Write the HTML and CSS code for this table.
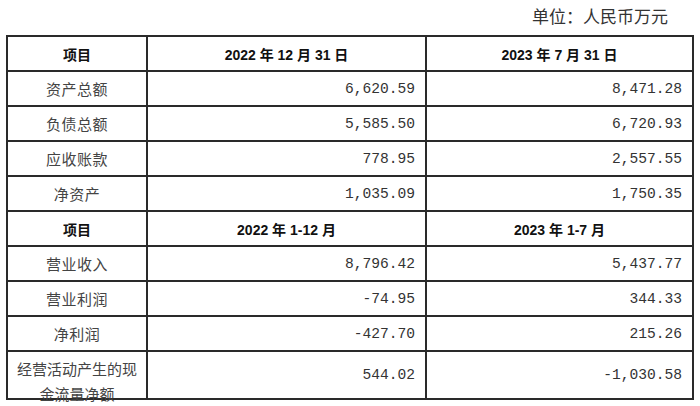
FILE: index.html
```html
<!DOCTYPE html>
<html lang="zh-CN">
<head>
<meta charset="UTF-8" />
<meta name="viewport" content="width=device-width, initial-scale=1" />
<title>主要财务数据</title>
<link rel="stylesheet" href="styles.css">
</head>
<body>
<div class="page">
  <div class="unit-note">单位：人民币万元</div>
  <table class="fin-table">
    <colgroup>
      <col class="col-item">
      <col class="col-a">
      <col class="col-b">
    </colgroup>
    <tr class="head-row">
      <th>项目</th>
      <th>2022 年 12 月 31 日</th>
      <th>2023 年 7 月 31 日</th>
    </tr>
    <tr>
      <td class="label">资产总额</td>
      <td class="num">6,620.59</td>
      <td class="num">8,471.28</td>
    </tr>
    <tr>
      <td class="label">负债总额</td>
      <td class="num">5,585.50</td>
      <td class="num">6,720.93</td>
    </tr>
    <tr>
      <td class="label">应收账款</td>
      <td class="num">778.95</td>
      <td class="num">2,557.55</td>
    </tr>
    <tr>
      <td class="label">净资产</td>
      <td class="num">1,035.09</td>
      <td class="num">1,750.35</td>
    </tr>
    <tr class="head-row">
      <th>项目</th>
      <th>2022 年 1-12 月</th>
      <th>2023 年 1-7 月</th>
    </tr>
    <tr>
      <td class="label">营业收入</td>
      <td class="num">8,796.42</td>
      <td class="num">5,437.77</td>
    </tr>
    <tr>
      <td class="label">营业利润</td>
      <td class="num">-74.95</td>
      <td class="num">344.33</td>
    </tr>
    <tr>
      <td class="label">净利润</td>
      <td class="num">-427.70</td>
      <td class="num">215.26</td>
    </tr>
    <tr class="tall-row">
      <td class="label"><div class="cash-label">经营活动产生的现金流量净额</div></td>
      <td class="num">544.02</td>
      <td class="num">-1,030.58</td>
    </tr>
  </table>
</div>
</body>
</html>
```

FILE: styles.css
```css
body, html {
  margin: 0; padding: 0; background: #fff; color: #333;
  font-family: "Liberation Serif", "Noto Sans CJK SC", serif;
}
.page {
  width: 700px; height: 406px; overflow: hidden;
}
.unit-note {
  text-align: right; padding-right: 32px; height: 35px; line-height: 32px;
  font-family: "Noto Sans CJK SC", sans-serif; font-size: 17px; color: #333;
}
.fin-table {
  margin-left: 6px; width: 686px; border-collapse: collapse; table-layout: fixed;
  border: 2px solid #222;
}
.col-item { width: 140px; }
.col-a { width: 279px; }
.col-b { width: 267px; }
.fin-table th, .fin-table td {
  border: 2px solid #2a2a2a; padding: 0; height: 33px;
}
.head-row th {
  font-family: "Liberation Sans", "Noto Sans CJK SC", sans-serif;
  font-size: 14px; font-weight: bold; color: #111; text-align: center;
}
.label {
  font-family: "Noto Sans CJK SC", sans-serif; font-size: 15px; color: #444;
  text-align: center; letter-spacing: 0.5px;
}
.num {
  font-family: "Liberation Mono", monospace; font-size: 14.6px; color: #333;
  text-align: right; padding-right: 10px !important;
}
.tall-row td { height: 46px; }
.cash-label {
  height: 46px; box-sizing: border-box; padding: 4px 2px 0; line-height: 25px;
  letter-spacing: 0; overflow: visible;
}
```
